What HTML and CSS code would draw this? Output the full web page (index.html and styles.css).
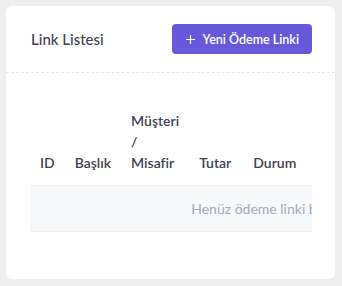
FILE: index.html
```html
<!DOCTYPE html>
<html lang="tr">
<head>
  <meta charset="UTF-8" />
  <meta name="viewport" content="width=device-width, initial-scale=1.0"/>
  <title>Link Listesi</title>
  <link rel="stylesheet" href="styles.css">
</head>
<body>
  <div class="card">
    <div class="card-header">
      <h3 class="card-title">Link Listesi</h3>
      <button class="btn-primary" type="button">
        <svg class="btn-icon" viewBox="0 0 10 10" width="9" height="9">
          <path d="M5 .5v9M.5 5h9" stroke="currentColor" stroke-width="1.3" stroke-linecap="round"/>
        </svg>
        Yeni Ödeme Linki
      </button>
    </div>
    <div class="card-body">
      <div class="table-wrap">
        <table class="table">
          <thead>
            <tr>
              <th>ID</th>
              <th>Başlık</th>
              <th>Müşteri / Misafir</th>
              <th>Tutar</th>
              <th>Durum</th>
              <th class="th-rest"></th>
            </tr>
          </thead>
          <tbody>
            <tr class="empty-row">
              <td colspan="6">Henüz ödeme linki bulunmuyor</td>
            </tr>
          </tbody>
        </table>
      </div>
    </div>
  </div>
</body>
</html>
```

FILE: styles.css
```css
body {
  margin: 0;
  padding: 6px 7px 7px 6px;
  background: #eeeeee;
  font-family: Lato, "Noto Sans", sans-serif;
  color: #3f4254;
}
.card {
  background: #fff;
  border-radius: 6px;
  height: 273px;
  overflow: hidden;
}
.card-header {
  display: flex;
  align-items: center;
  justify-content: space-between;
  padding: 18px 23px 18px 25px;
  border-bottom: 1px dashed #e6e7ec;
}
.card-title {
  margin: 0;
  font-size: 15px;
  font-weight: 500;
  color: #3f4254;
}
.btn-primary {
  display: flex;
  align-items: center;
  gap: 8px;
  height: 30px;
  padding: 0 13px 0 14px;
  border: 0;
  border-radius: 4px;
  background: #6658d9;
  color: #fff;
  font-family: inherit;
  font-size: 12.5px;
  font-weight: 600;
}
.btn-icon {
  display: block;
}
.card-body {
  padding: 25px 23px 24px 24px;
}
.table-wrap {
  overflow: hidden;
}
/* tablo kutudan genis, sag taraf kesiliyor */
.table {
  width: 514px;
  border-collapse: collapse;
  font-size: 14px;
  line-height: 21px;
}
.table th {
  width: 1px;
  padding: 12px 10px;
  text-align: left;
  vertical-align: bottom;
  font-weight: 600;
  color: #3f4254;
}
.table th:nth-child(4) {
  padding-right: 12px;
}
.table .th-rest {
  width: auto;
}
.empty-row td {
  padding: 12px 10px;
  text-align: center;
  background: #f7f8fa;
  color: #a3a9c2;
  border-top: 1px solid #eef0f4;
  border-bottom: 1px solid #eef0f4;
  white-space: nowrap;
}
```
